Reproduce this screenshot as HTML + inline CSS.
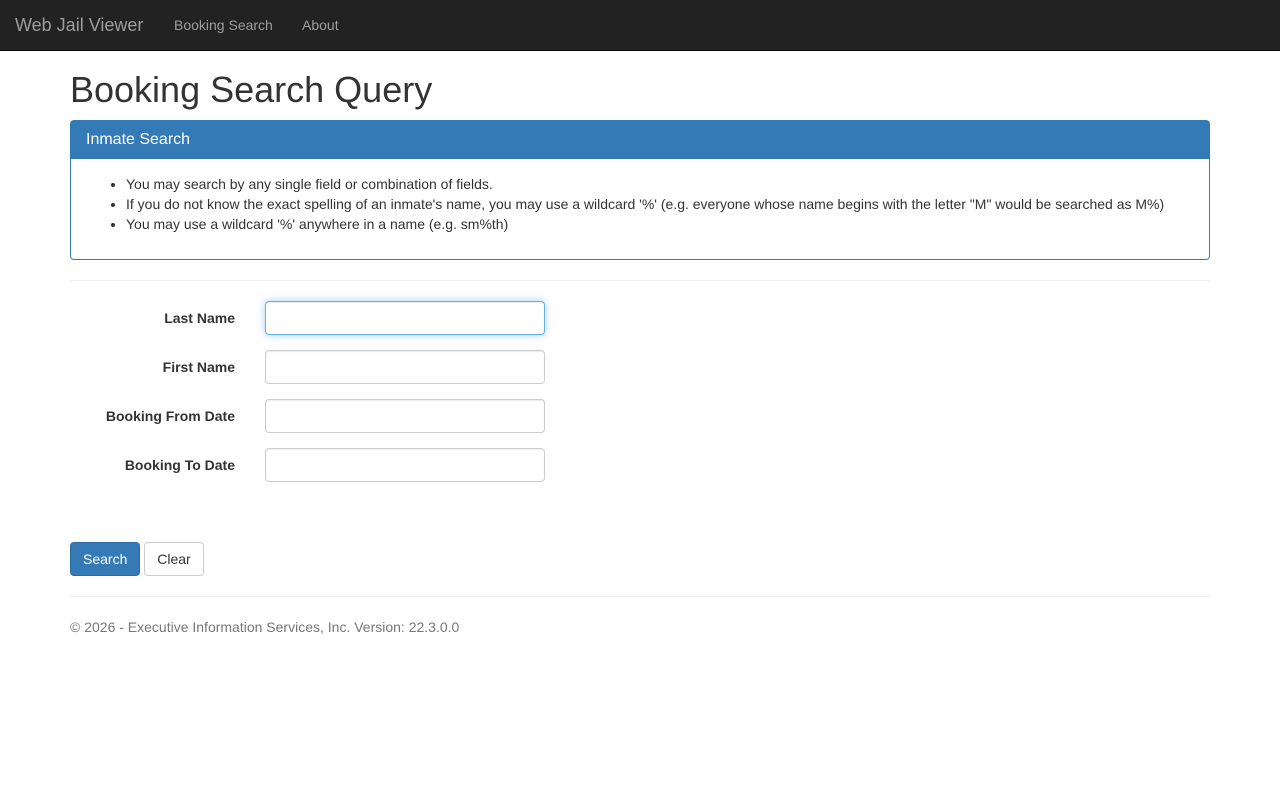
<!DOCTYPE html>
<html><head><meta charset="utf-8"><style>
*{box-sizing:border-box}
body{margin:0;font-family:"Liberation Sans",Arial,sans-serif;font-size:14px;line-height:1.42857;color:#333;background:#fff}
.nav{height:51px;background:#222;border-bottom:1px solid #080808;position:relative}
.nav a{position:absolute;color:#9d9d9d;text-decoration:none;line-height:50px;top:0}
.brand{left:15px;font-size:18px}
.container{width:1140px;margin:0 auto;position:relative}
h1{font-size:36px;font-weight:500;line-height:1.1;margin:19px 0 10px}
.panel{border:1px solid #337ab7;border-radius:4px;margin-bottom:20px}
.ph{background:#337ab7;color:#fff;padding:10px 15px;font-size:16px;line-height:1.1;height:38px;padding-top:10px}
.pb{padding:16px 15px 14px}
ul{margin:0 0 10px;padding-left:40px;font-size:14px}
hr{border:0;border-top:1px solid #eee;margin:20px 0}
.fg{height:34px;margin-bottom:15px;position:relative}
.fg label{position:absolute;right:975px;top:8px;font-weight:bold;white-space:nowrap}
.fg input{position:absolute;left:195px;width:280px;height:34px;border:1px solid #ccc;border-radius:4px;box-shadow:inset 0 1px 1px rgba(0,0,0,.075)}
.fg input.f{border-color:#66afe9;box-shadow:inset 0 1px 1px rgba(0,0,0,.075),0 0 8px rgba(102,175,233,.6)}
.btn{display:inline-block;height:34px;padding:6px 12px;border-radius:4px;font-size:14px;line-height:20px;border:1px solid #ccc;background:#fff;color:#333;margin-right:0}
.bp{background:#337ab7;border-color:#2e6da4;color:#fff}
footer p{margin:0;padding-top:1px;color:#777}
</style></head><body>
<div class="nav"><a class="brand" href="#">Web Jail Viewer</a><a href="#" style="left:174px">Booking Search</a><a href="#" style="left:302px">About</a></div>
<div class="container">
<h1>Booking Search Query</h1>
<div class="panel"><div class="ph">Inmate Search</div><div class="pb"><ul>
<li>You may search by any single field or combination of fields.</li>
<li>If you do not know the exact spelling of an inmate's name, you may use a wildcard '%' (e.g. everyone whose name begins with the letter "M" would be searched as M%)</li>
<li>You may use a wildcard '%' anywhere in a name (e.g. sm%th)</li></ul></div></div>
<hr>
<div class="fg"><label>Last Name</label><input class="f"></div>
<div class="fg"><label>First Name</label><input></div>
<div class="fg"><label>Booking From Date</label><input></div>
<div class="fg"><label>Booking To Date</label><input></div>
<div style="height:45px"></div>
<div><span class="btn bp">Search</span> <span class="btn">Clear</span></div>
<hr>
<footer><p>© 2026 - Executive Information Services, Inc. Version: 22.3.0.0</p></footer>
</div>
</body></html>
